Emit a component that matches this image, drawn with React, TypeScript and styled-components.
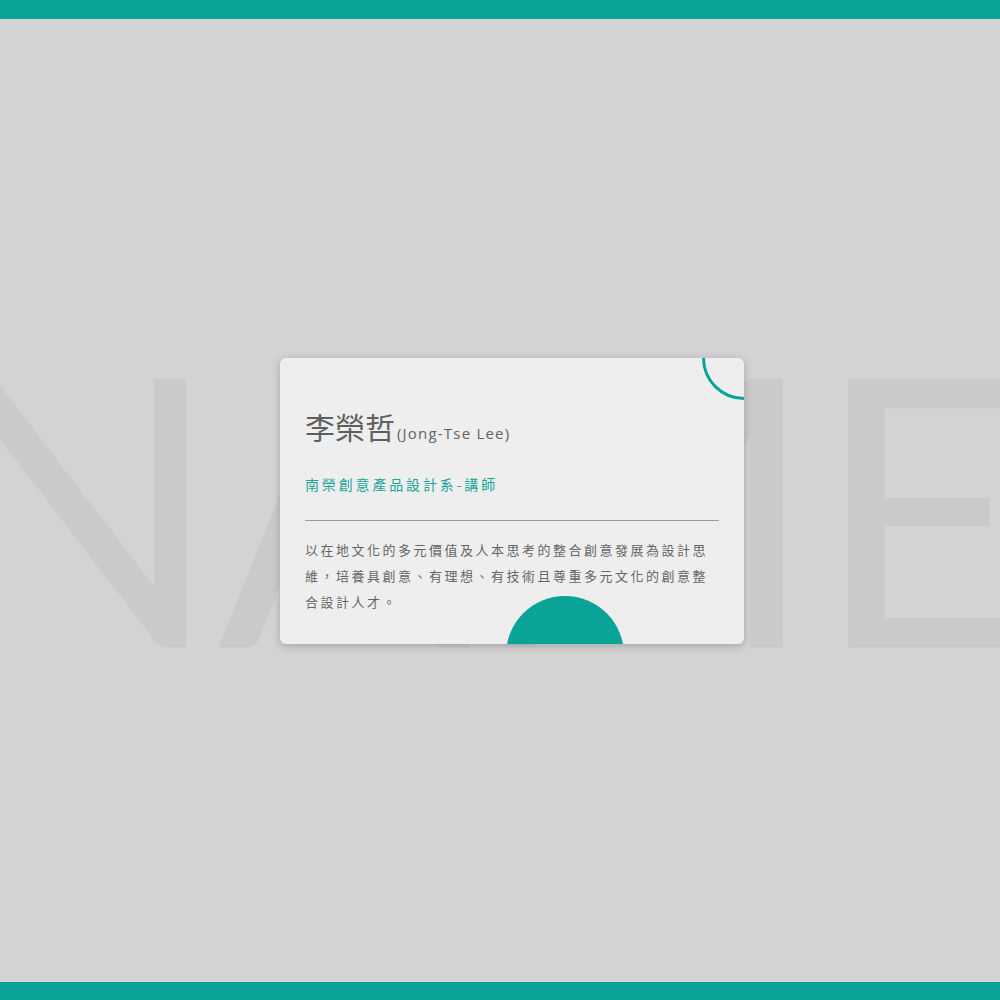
import React, { FC } from 'react';
import styled, { createGlobalStyle } from 'styled-components';

const TEAL = '#0aa398';

const GlobalStyle = createGlobalStyle`
  html, body {
    margin: 0;
    padding: 0;
    background: #d3d3d3;
  }

  #root {
    min-height: 100vh;
  }
`;

const profile = {
  name: '李榮哲',
  enName: '(Jong-Tse Lee)',
  title: '南榮創意產品設計系-講師',
  intro:
    '以在地文化的多元價值及人本思考的整合創意發展為設計思維，培養具創意、有理想、有技術且尊重多元文化的創意整合設計人才。',
};

const App: FC = () => (
  <>
    <GlobalStyle />
    <Root>
      <TopBar />
      <Stage>
        <Watermark aria-hidden>NAME</Watermark>
        <Card>
          <Ring />
          <Dome />
          <NameRow>
            <Name>{profile.name}</Name>
            <EnName>{profile.enName}</EnName>
          </NameRow>
          <Title>{profile.title}</Title>
          <Divider />
          <Intro>{profile.intro}</Intro>
        </Card>
      </Stage>
      <BottomBar />
    </Root>
  </>
);
export default App;

const Root = styled.div`
  display: flex;
  flex-direction: column;
  height: 1000px;
  overflow: hidden;
`;

const TopBar = styled.div`
  height: 19px;
  flex-shrink: 0;
  background: ${TEAL};
`;

const BottomBar = styled.div`
  height: 18px;
  flex-shrink: 0;
  background: ${TEAL};
`;

const Stage = styled.main`
  position: relative;
  flex: 1;
  display: flex;
  align-items: center;
  justify-content: center;
  padding-left: 24px;
  overflow: hidden;
`;

const Watermark = styled.div`
  position: absolute;
  top: 50%;
  left: 481px;
  transform: translate(-50%, calc(-50% + 2px));
  font-family: Lato, 'Open Sans', sans-serif;
  font-weight: 400;
  font-size: 375px;
  line-height: 1;
  letter-spacing: -2.7px;
  color: #cacaca;
  white-space: nowrap;
  user-select: none;
`;

const Card = styled.section`
  position: relative;
  box-sizing: border-box;
  width: 464px;
  height: 286px;
  padding: 50px 25px 0;
  background: #eeeeee;
  border-radius: 6px;
  box-shadow: 0 2px 8px rgba(0, 0, 0, 0.22);
  overflow: hidden;
  font-family: 'Noto Sans CJK TC', 'Noto Sans', sans-serif;
`;

const Ring = styled.div`
  position: absolute;
  top: -42px;
  right: -42px;
  box-sizing: border-box;
  width: 84px;
  height: 84px;
  border: 3px solid ${TEAL};
  border-radius: 50%;
`;

const Dome = styled.div`
  position: absolute;
  left: 226px;
  top: 238px;
  width: 118px;
  height: 118px;
  border-radius: 50%;
  background: ${TEAL};
`;

const NameRow = styled.h2`
  display: flex;
  align-items: baseline;
  margin: 0;
  height: 36px;
  font-weight: 400;
  color: #5f5f5f;
`;

const Name = styled.span`
  font-size: 30px;
  line-height: 36px;
`;

const EnName = styled.span`
  margin-left: 2px;
  font-family: 'Open Sans', 'Noto Sans', sans-serif;
  font-size: 15px;
  letter-spacing: 1.2px;
  color: #636363;
`;

const Title = styled.p`
  margin: 30px 0 0;
  font-size: 14px;
  line-height: 20px;
  letter-spacing: 2.85px;
  color: #1aa59a;
`;

const Divider = styled.hr`
  margin: 26px 0 0;
  border: 0;
  border-top: 1px solid #9a9a9a;
`;

const Intro = styled.p`
  margin: 16px 0 0;
  font-size: 13px;
  line-height: 26px;
  letter-spacing: 2.5px;
  color: #666666;
`;
